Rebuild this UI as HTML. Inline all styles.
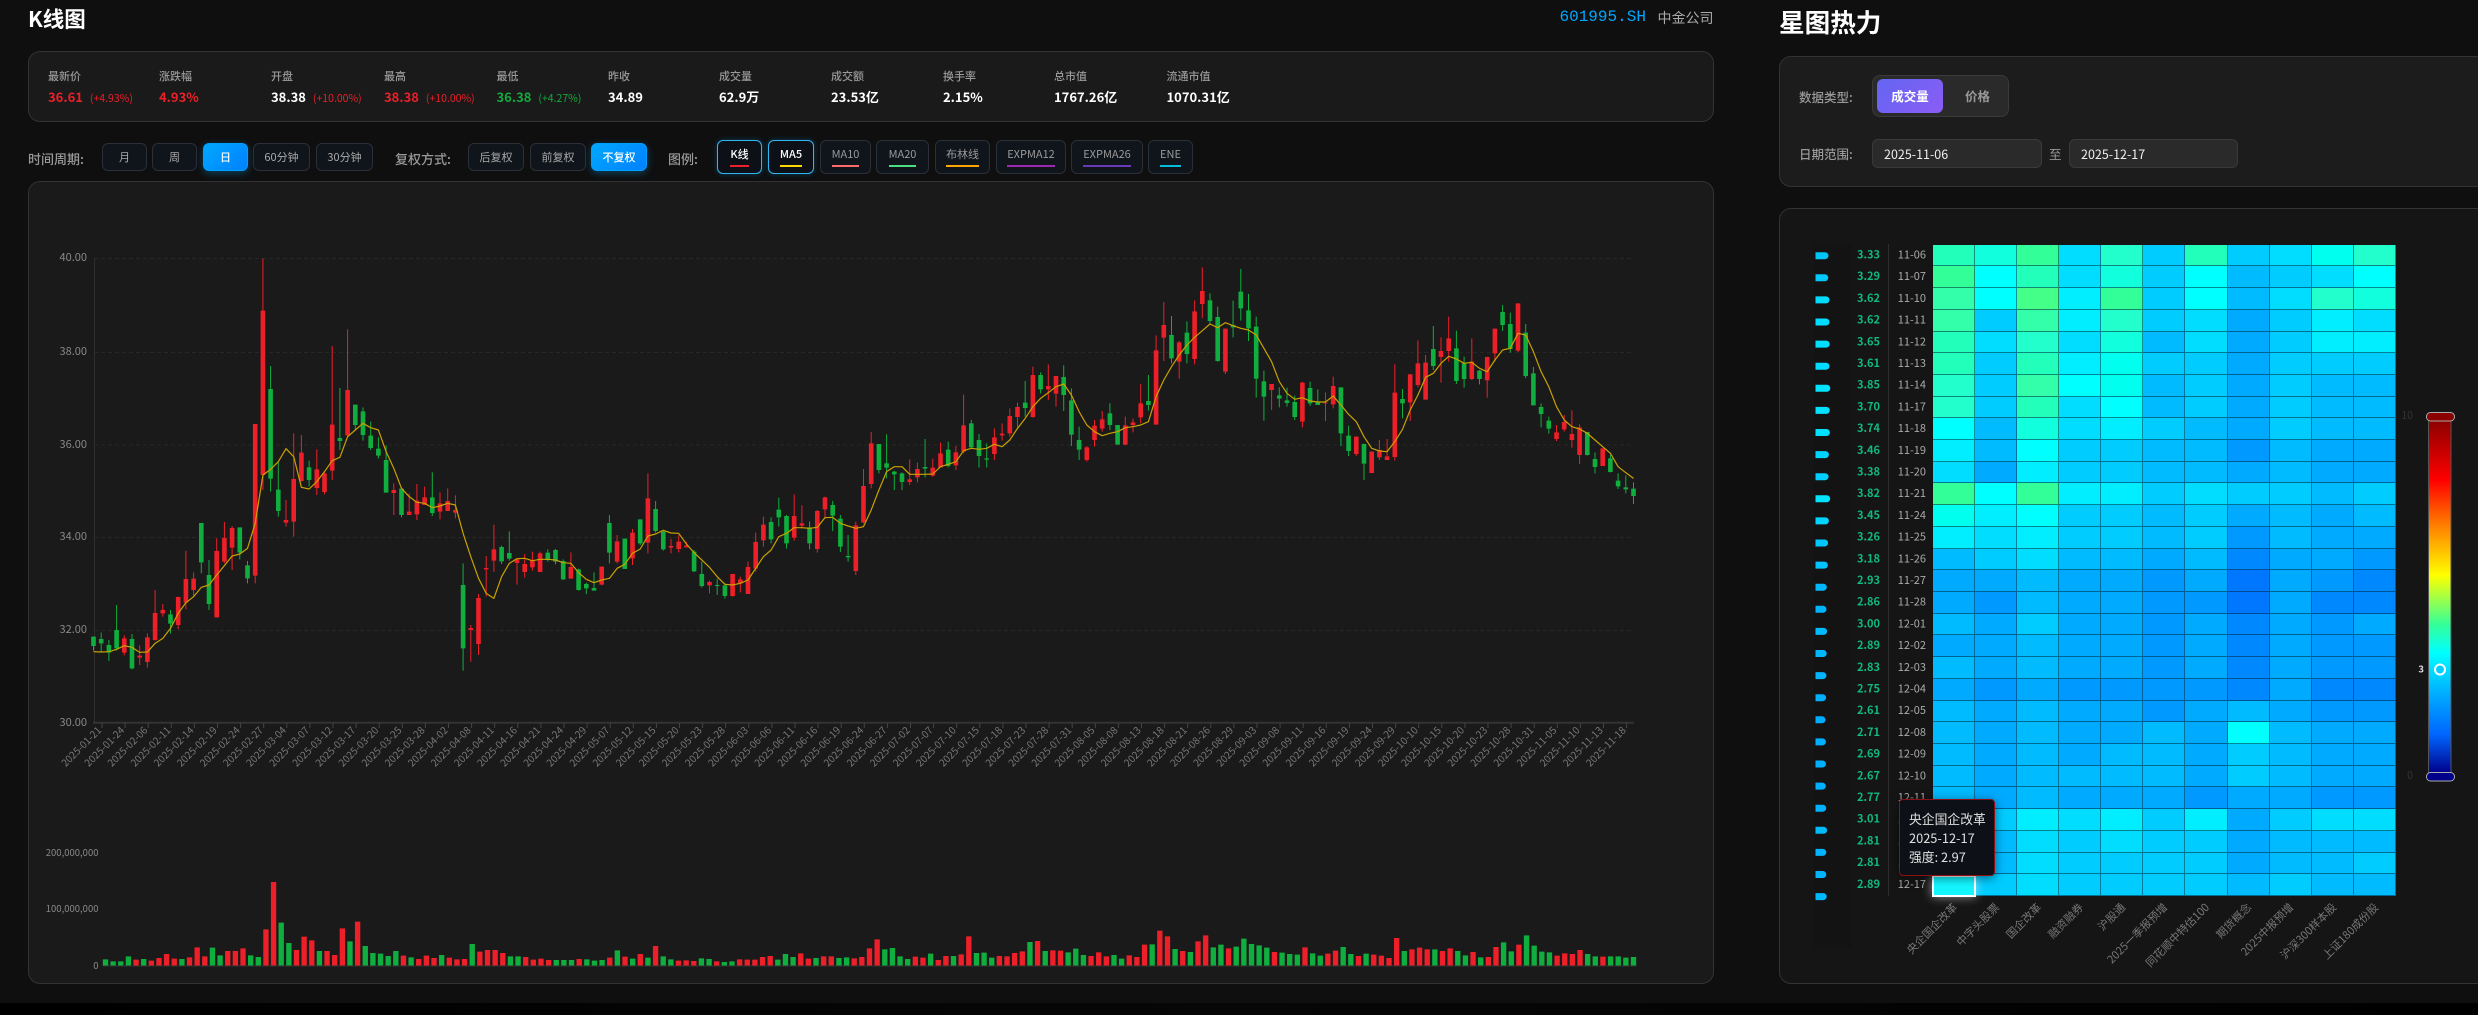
<!DOCTYPE html>
<html lang="zh"><head><meta charset="utf-8"><title>K线图</title>
<style>
*{box-sizing:border-box}
html,body{margin:0;padding:0;width:2478px;height:1015px;overflow:hidden;background:#0f0f0f}
body{position:relative;font-family:"Noto Sans CJK SC","Liberation Sans",sans-serif;color:#fff}
.a{position:absolute;white-space:nowrap}
.card{position:absolute;background:#1a1a1a;border:1px solid #333;border-radius:12px}
.lb{position:absolute;top:68px;font-size:11px;line-height:16px;color:#999;font-weight:500}
.v{position:absolute;top:86px;font-size:13px;line-height:22px;font-weight:700;color:#fff}
.c{font-size:10.5px;font-weight:400;margin-left:7px}
.r{color:#ed1f28}.g{color:#12ab3e}
.t{position:absolute;font-size:13px;line-height:20px;top:149px;color:#999;font-weight:500}
.b{position:absolute;top:143px;height:28px;border:1px solid #2a2f38;border-radius:6px;background:#10151c;color:#aaa;font-size:11px;display:flex;align-items:center;justify-content:center}
.on{background:linear-gradient(135deg,#00a8ff,#0080ff);border-color:#00a0ff;color:#fff;font-weight:500;box-shadow:0 2px 8px rgba(0,168,255,.35)}
.l{position:absolute;top:140px;height:34px;border:1px solid #2a2f38;border-radius:6px;background:#10151c;color:#999;font-size:11px;display:flex;align-items:flex-start;justify-content:center;padding-top:5px}
.l span{display:block;line-height:16px;padding-bottom:3px;border-bottom:2px solid}
.la{border-color:#33b5f0;color:#fff;font-weight:500;background:#0d1117;box-shadow:0 0 6px rgba(0,168,255,.3)}
.in{position:absolute;top:139px;height:29px;background:#2a2a2a;border:1px solid #3a3a3a;border-radius:6px;color:#eee;font-size:12.5px;line-height:27px;padding-left:11px}
#heat{position:absolute;left:1932.6px;top:244.7px;width:463.6px;height:651.3px;display:grid;grid-template-columns:repeat(11,1fr);grid-template-rows:repeat(30,1fr)}
#heat i{display:block;border-right:1px solid rgba(0,40,60,.5);border-bottom:1px solid rgba(0,40,60,.55)}
svg{position:absolute;left:0;top:0}
text{font-family:"Noto Sans CJK SC","Liberation Sans",sans-serif}
.ax{font-size:11px;fill:#888;text-anchor:end}
.xl{font-size:10px;fill:#777;text-anchor:end}
.hv{font-size:11px;fill:#10b981;font-weight:700;text-anchor:end}
.hd{font-size:11px;fill:#aaa;text-anchor:end}
.hx{font-size:11px;fill:#777;text-anchor:end}
</style></head><body>
<div class="a" style="left:0;top:1003px;width:2478px;height:12px;background:linear-gradient(90deg,#000,#070707 50%,#000)"></div>

<div class="a" style="left:28px;top:2px;font-size:21.5px;line-height:34px;font-weight:700">K线图</div>
<div class="a" style="left:1559.5px;top:6px;font-family:'Liberation Mono',monospace;font-size:16px;line-height:22px;color:#00a8ff">601995.SH</div>
<div class="a" style="left:1657.5px;top:7px;font-size:14px;line-height:22px;color:#aaa">中金公司</div>
<div class="a" style="left:1779px;top:2px;font-size:25.6px;line-height:40px;font-weight:700">星图热力</div>

<div class="card" style="left:28px;top:51px;width:1686px;height:71px"></div>
<div class="lb" style="left:48px">最新价</div><div class="v r" style="left:48px">36.61<span class="c">(+4.93%)</span></div>
<div class="lb" style="left:159px">涨跌幅</div><div class="v r" style="left:159px">4.93%</div>
<div class="lb" style="left:271px">开盘</div><div class="v" style="left:271px">38.38<span class="c r">(+10.00%)</span></div>
<div class="lb" style="left:384px">最高</div><div class="v r" style="left:384px">38.38<span class="c">(+10.00%)</span></div>
<div class="lb" style="left:496.5px">最低</div><div class="v g" style="left:496.5px">36.38<span class="c">(+4.27%)</span></div>
<div class="lb" style="left:608px">昨收</div><div class="v" style="left:608px">34.89</div>
<div class="lb" style="left:719px">成交量</div><div class="v" style="left:719px">62.9万</div>
<div class="lb" style="left:831px">成交额</div><div class="v" style="left:831px">23.53亿</div>
<div class="lb" style="left:943px">换手率</div><div class="v" style="left:943px">2.15%</div>
<div class="lb" style="left:1054px">总市值</div><div class="v" style="left:1054px">1767.26亿</div>
<div class="lb" style="left:1166.5px">流通市值</div><div class="v" style="left:1166.5px">1070.31亿</div>

<div class="t" style="left:28px">时间周期:</div>
<div class="b" style="left:102px;width:45px">月</div>
<div class="b" style="left:152px;width:45px">周</div>
<div class="b on" style="left:203px;width:45px">日</div>
<div class="b" style="left:253px;width:57px">60分钟</div>
<div class="b" style="left:316px;width:57px">30分钟</div>
<div class="t" style="left:395px">复权方式:</div>
<div class="b" style="left:468px;width:56px">后复权</div>
<div class="b" style="left:530px;width:56px">前复权</div>
<div class="b on" style="left:591px;width:56px">不复权</div>
<div class="t" style="left:668px">图例:</div>
<div class="l la" style="left:717px;width:45px"><span style="border-color:#ed1f28">K线</span></div>
<div class="l la" style="left:768px;width:46px"><span style="border-color:#ffd700">MA5</span></div>
<div class="l" style="left:820px;width:51px"><span style="border-color:#ff6b6b">MA10</span></div>
<div class="l" style="left:876px;width:53px"><span style="border-color:#4ade80">MA20</span></div>
<div class="l" style="left:935px;width:55px"><span style="border-color:#ffa500">布林线</span></div>
<div class="l" style="left:996px;width:70px"><span style="border-color:#9c27b0">EXPMA12</span></div>
<div class="l" style="left:1071px;width:72px"><span style="border-color:#673ab7">EXPMA26</span></div>
<div class="l" style="left:1148px;width:45px"><span style="border-color:#00bcd4">ENE</span></div>

<div class="card" style="left:28px;top:181px;width:1686px;height:803px"></div>

<div class="card" style="left:1779px;top:56px;width:760px;height:131px;background:#1c1c1c"></div>
<div class="t" style="left:1799px;top:87px;font-size:12.5px">数据类型:</div>
<div class="a" style="left:1872px;top:75px;width:137px;height:42px;background:#2a2a2a;border:1px solid #3a3a3a;border-radius:8px"></div>
<div class="a" style="left:1877px;top:79px;width:66px;height:34px;border-radius:6px;background:linear-gradient(135deg,#6366f1,#8b5cf6);font-size:12.5px;font-weight:700;line-height:34px;text-align:center">成交量</div>
<div class="a" style="left:1965px;top:86px;font-size:12.5px;font-weight:700;color:#999;line-height:20px">价格</div>
<div class="t" style="left:1799px;top:144px;font-size:12.5px">日期范围:</div>
<div class="in" style="left:1872px;width:170px">2025-11-06</div>
<div class="a" style="left:2049px;top:144px;font-size:12.5px;line-height:20px;color:#999">至</div>
<div class="in" style="left:2069px;width:169px">2025-12-17</div>

<div class="card" style="left:1779px;top:208px;width:760px;height:776px;background:#151515"></div>
<div class="a" style="left:1814px;top:244px;width:37px;height:704px;background:#131313"></div>

<div id="heat">
<i style="background:#2fb"></i><i style="background:#1fd"></i><i style="background:#3f9"></i><i style="background:#0df"></i><i style="background:#2fc"></i><i style="background:#0cf"></i><i style="background:#2fb"></i><i style="background:#0cf"></i><i style="background:#0df"></i><i style="background:#0fe"></i><i style="background:#2fc"></i>
<i style="background:#3f9"></i><i style="background:#0ff"></i><i style="background:#2fb"></i><i style="background:#0df"></i><i style="background:#1fd"></i><i style="background:#0cf"></i><i style="background:#0ff"></i><i style="background:#0bf"></i><i style="background:#0cf"></i><i style="background:#0df"></i><i style="background:#0ff"></i>
<i style="background:#3fa"></i><i style="background:#0ff"></i><i style="background:#4f8"></i><i style="background:#0ef"></i><i style="background:#3f9"></i><i style="background:#0cf"></i><i style="background:#0ff"></i><i style="background:#0bf"></i><i style="background:#0df"></i><i style="background:#2fc"></i><i style="background:#1fd"></i>
<i style="background:#3fa"></i><i style="background:#0cf"></i><i style="background:#3fa"></i><i style="background:#0ef"></i><i style="background:#2fc"></i><i style="background:#0cf"></i><i style="background:#0df"></i><i style="background:#0af"></i><i style="background:#0cf"></i><i style="background:#0ef"></i><i style="background:#0df"></i>
<i style="background:#2fb"></i><i style="background:#0df"></i><i style="background:#2fc"></i><i style="background:#0df"></i><i style="background:#1fd"></i><i style="background:#0bf"></i><i style="background:#0df"></i><i style="background:#0af"></i><i style="background:#0cf"></i><i style="background:#0ef"></i><i style="background:#0ef"></i>
<i style="background:#2fb"></i><i style="background:#0cf"></i><i style="background:#2fb"></i><i style="background:#0ef"></i><i style="background:#0fe"></i><i style="background:#0cf"></i><i style="background:#0cf"></i><i style="background:#0af"></i><i style="background:#0cf"></i><i style="background:#0cf"></i><i style="background:#0cf"></i>
<i style="background:#2fc"></i><i style="background:#0cf"></i><i style="background:#3fa"></i><i style="background:#0ff"></i><i style="background:#0fe"></i><i style="background:#0bf"></i><i style="background:#0cf"></i><i style="background:#0af"></i><i style="background:#0cf"></i><i style="background:#0bf"></i><i style="background:#0bf"></i>
<i style="background:#2fc"></i><i style="background:#0cf"></i><i style="background:#2fb"></i><i style="background:#0df"></i><i style="background:#0ff"></i><i style="background:#0bf"></i><i style="background:#0cf"></i><i style="background:#0af"></i><i style="background:#0cf"></i><i style="background:#0bf"></i><i style="background:#0bf"></i>
<i style="background:#0ff"></i><i style="background:#0bf"></i><i style="background:#1fd"></i><i style="background:#0df"></i><i style="background:#0ef"></i><i style="background:#0cf"></i><i style="background:#0bf"></i><i style="background:#0af"></i><i style="background:#0cf"></i><i style="background:#0bf"></i><i style="background:#0bf"></i>
<i style="background:#0ef"></i><i style="background:#0bf"></i><i style="background:#0ff"></i><i style="background:#0cf"></i><i style="background:#0cf"></i><i style="background:#0bf"></i><i style="background:#0bf"></i><i style="background:#09f"></i><i style="background:#0bf"></i><i style="background:#0af"></i><i style="background:#0af"></i>
<i style="background:#0df"></i><i style="background:#0af"></i><i style="background:#0ef"></i><i style="background:#0cf"></i><i style="background:#0cf"></i><i style="background:#0bf"></i><i style="background:#0bf"></i><i style="background:#0af"></i><i style="background:#0bf"></i><i style="background:#0af"></i><i style="background:#0af"></i>
<i style="background:#3f9"></i><i style="background:#0ff"></i><i style="background:#3f9"></i><i style="background:#0ef"></i><i style="background:#0ef"></i><i style="background:#0cf"></i><i style="background:#0df"></i><i style="background:#0cf"></i><i style="background:#0cf"></i><i style="background:#0bf"></i><i style="background:#0cf"></i>
<i style="background:#0fe"></i><i style="background:#0ef"></i><i style="background:#0ff"></i><i style="background:#0cf"></i><i style="background:#0cf"></i><i style="background:#0bf"></i><i style="background:#0cf"></i><i style="background:#0af"></i><i style="background:#0bf"></i><i style="background:#0af"></i><i style="background:#0bf"></i>
<i style="background:#0ef"></i><i style="background:#0df"></i><i style="background:#0ef"></i><i style="background:#0cf"></i><i style="background:#0cf"></i><i style="background:#0bf"></i><i style="background:#0cf"></i><i style="background:#09f"></i><i style="background:#0bf"></i><i style="background:#0af"></i><i style="background:#0af"></i>
<i style="background:#0bf"></i><i style="background:#0cf"></i><i style="background:#0df"></i><i style="background:#0bf"></i><i style="background:#0bf"></i><i style="background:#0af"></i><i style="background:#0bf"></i><i style="background:#08f"></i><i style="background:#0af"></i><i style="background:#0af"></i><i style="background:#09f"></i>
<i style="background:#0af"></i><i style="background:#0af"></i><i style="background:#0bf"></i><i style="background:#0af"></i><i style="background:#0af"></i><i style="background:#09f"></i><i style="background:#0af"></i><i style="background:#07f"></i><i style="background:#0af"></i><i style="background:#09f"></i><i style="background:#08f"></i>
<i style="background:#0af"></i><i style="background:#09f"></i><i style="background:#0bf"></i><i style="background:#0af"></i><i style="background:#0af"></i><i style="background:#09f"></i><i style="background:#09f"></i><i style="background:#07f"></i><i style="background:#0af"></i><i style="background:#08f"></i><i style="background:#08f"></i>
<i style="background:#0bf"></i><i style="background:#0af"></i><i style="background:#0cf"></i><i style="background:#0af"></i><i style="background:#0af"></i><i style="background:#09f"></i><i style="background:#0af"></i><i style="background:#08f"></i><i style="background:#0af"></i><i style="background:#09f"></i><i style="background:#0af"></i>
<i style="background:#0af"></i><i style="background:#0af"></i><i style="background:#0bf"></i><i style="background:#0af"></i><i style="background:#0af"></i><i style="background:#09f"></i><i style="background:#0af"></i><i style="background:#08f"></i><i style="background:#0af"></i><i style="background:#09f"></i><i style="background:#09f"></i>
<i style="background:#0bf"></i><i style="background:#0af"></i><i style="background:#0bf"></i><i style="background:#0af"></i><i style="background:#0af"></i><i style="background:#09f"></i><i style="background:#0af"></i><i style="background:#08f"></i><i style="background:#0af"></i><i style="background:#09f"></i><i style="background:#09f"></i>
<i style="background:#0af"></i><i style="background:#09f"></i><i style="background:#0af"></i><i style="background:#09f"></i><i style="background:#09f"></i><i style="background:#09f"></i><i style="background:#09f"></i><i style="background:#08f"></i><i style="background:#0af"></i><i style="background:#08f"></i><i style="background:#08f"></i>
<i style="background:#0bf"></i><i style="background:#0af"></i><i style="background:#0bf"></i><i style="background:#0af"></i><i style="background:#0af"></i><i style="background:#09f"></i><i style="background:#0af"></i><i style="background:#0bf"></i><i style="background:#0af"></i><i style="background:#09f"></i><i style="background:#09f"></i>
<i style="background:#0bf"></i><i style="background:#0af"></i><i style="background:#0bf"></i><i style="background:#0af"></i><i style="background:#0af"></i><i style="background:#0bf"></i><i style="background:#0af"></i><i style="background:#0ff"></i><i style="background:#0bf"></i><i style="background:#0af"></i><i style="background:#0af"></i>
<i style="background:#0bf"></i><i style="background:#0af"></i><i style="background:#0bf"></i><i style="background:#0af"></i><i style="background:#0bf"></i><i style="background:#0bf"></i><i style="background:#0af"></i><i style="background:#0cf"></i><i style="background:#0bf"></i><i style="background:#0af"></i><i style="background:#0af"></i>
<i style="background:#0bf"></i><i style="background:#0af"></i><i style="background:#0bf"></i><i style="background:#0bf"></i><i style="background:#0bf"></i><i style="background:#0bf"></i><i style="background:#0af"></i><i style="background:#0cf"></i><i style="background:#0bf"></i><i style="background:#0af"></i><i style="background:#0af"></i>
<i style="background:#0bf"></i><i style="background:#0af"></i><i style="background:#0bf"></i><i style="background:#0af"></i><i style="background:#0af"></i><i style="background:#0af"></i><i style="background:#09f"></i><i style="background:#0af"></i><i style="background:#0af"></i><i style="background:#09f"></i><i style="background:#09f"></i>
<i style="background:#0cf"></i><i style="background:#0cf"></i><i style="background:#0ef"></i><i style="background:#0df"></i><i style="background:#0ef"></i><i style="background:#0cf"></i><i style="background:#0ef"></i><i style="background:#0af"></i><i style="background:#0cf"></i><i style="background:#0df"></i><i style="background:#0df"></i>
<i style="background:#0cf"></i><i style="background:#0bf"></i><i style="background:#0df"></i><i style="background:#0cf"></i><i style="background:#0df"></i><i style="background:#0cf"></i><i style="background:#0cf"></i><i style="background:#0af"></i><i style="background:#0bf"></i><i style="background:#0bf"></i><i style="background:#0bf"></i>
<i style="background:#0cf"></i><i style="background:#0bf"></i><i style="background:#0df"></i><i style="background:#0cf"></i><i style="background:#0cf"></i><i style="background:#0cf"></i><i style="background:#0cf"></i><i style="background:#0af"></i><i style="background:#0bf"></i><i style="background:#0bf"></i><i style="background:#0cf"></i>
<i style="background:#0ff"></i><i style="background:#0cf"></i><i style="background:#0df"></i><i style="background:#0cf"></i><i style="background:#0cf"></i><i style="background:#0cf"></i><i style="background:#0cf"></i><i style="background:#0bf"></i><i style="background:#0cf"></i><i style="background:#0bf"></i><i style="background:#0bf"></i>
</div>

<svg width="2478" height="1015" viewBox="0 0 2478 1015" fill="none">
<g stroke="#272727" stroke-dasharray="4 3"><path d="M94 258.5H1633M94 352.5H1633M94 445H1633M94 537.5H1633M94 630.5H1633"/></g>
<path d="M94.5 258V722" stroke="#2e2e2e"/>
<path d="M93 722.7H1634" stroke="#333" stroke-width="2"/>
<path stroke="#444" d="M102 723v5M125.1 723v5M148.2 723v5M171.3 723v5M194.4 723v5M217.5 723v5M240.6 723v5M263.7 723v5M286.8 723v5M309.9 723v5M333 723v5M356.1 723v5M379.2 723v5M402.3 723v5M425.4 723v5M448.5 723v5M471.6 723v5M494.7 723v5M517.8 723v5M540.9 723v5M564 723v5M587.1 723v5M610.2 723v5M633.3 723v5M656.4 723v5M679.5 723v5M702.6 723v5M725.7 723v5M748.8 723v5M771.9 723v5M795 723v5M818.1 723v5M841.2 723v5M864.3 723v5M887.4 723v5M910.5 723v5M933.6 723v5M956.7 723v5M979.8 723v5M1002.9 723v5M1026 723v5M1049.1 723v5M1072.2 723v5M1095.3 723v5M1118.4 723v5M1141.5 723v5M1164.6 723v5M1187.7 723v5M1210.8 723v5M1233.9 723v5M1257 723v5M1280.1 723v5M1303.2 723v5M1326.3 723v5M1349.4 723v5M1372.5 723v5M1395.6 723v5M1418.7 723v5M1441.8 723v5M1464.9 723v5M1488 723v5M1511.1 723v5M1534.2 723v5M1557.3 723v5M1580.4 723v5M1603.5 723v5M1626.6 723v5"/>
<g><text class="ax" x="87" y="261">40.00</text><text class="ax" x="87" y="355">38.00</text><text class="ax" x="87" y="448">36.00</text><text class="ax" x="87" y="540">34.00</text><text class="ax" x="87" y="633">32.00</text><text class="ax" x="87" y="726">30.00</text></g>
<g>
<text class="xl" transform="translate(102,731) rotate(-45)">2025-01-21</text><text class="xl" transform="translate(125.1,731) rotate(-45)">2025-01-24</text><text class="xl" transform="translate(148.2,731) rotate(-45)">2025-02-06</text><text class="xl" transform="translate(171.3,731) rotate(-45)">2025-02-11</text><text class="xl" transform="translate(194.4,731) rotate(-45)">2025-02-14</text><text class="xl" transform="translate(217.5,731) rotate(-45)">2025-02-19</text><text class="xl" transform="translate(240.6,731) rotate(-45)">2025-02-24</text><text class="xl" transform="translate(263.7,731) rotate(-45)">2025-02-27</text><text class="xl" transform="translate(286.8,731) rotate(-45)">2025-03-04</text><text class="xl" transform="translate(309.9,731) rotate(-45)">2025-03-07</text><text class="xl" transform="translate(333,731) rotate(-45)">2025-03-12</text><text class="xl" transform="translate(356.1,731) rotate(-45)">2025-03-17</text><text class="xl" transform="translate(379.2,731) rotate(-45)">2025-03-20</text><text class="xl" transform="translate(402.3,731) rotate(-45)">2025-03-25</text><text class="xl" transform="translate(425.4,731) rotate(-45)">2025-03-28</text><text class="xl" transform="translate(448.5,731) rotate(-45)">2025-04-02</text><text class="xl" transform="translate(471.6,731) rotate(-45)">2025-04-08</text><text class="xl" transform="translate(494.7,731) rotate(-45)">2025-04-11</text><text class="xl" transform="translate(517.8,731) rotate(-45)">2025-04-16</text><text class="xl" transform="translate(540.9,731) rotate(-45)">2025-04-21</text><text class="xl" transform="translate(564,731) rotate(-45)">2025-04-24</text><text class="xl" transform="translate(587.1,731) rotate(-45)">2025-04-29</text><text class="xl" transform="translate(610.2,731) rotate(-45)">2025-05-07</text><text class="xl" transform="translate(633.3,731) rotate(-45)">2025-05-12</text><text class="xl" transform="translate(656.4,731) rotate(-45)">2025-05-15</text><text class="xl" transform="translate(679.5,731) rotate(-45)">2025-05-20</text><text class="xl" transform="translate(702.6,731) rotate(-45)">2025-05-23</text><text class="xl" transform="translate(725.7,731) rotate(-45)">2025-05-28</text><text class="xl" transform="translate(748.8,731) rotate(-45)">2025-06-03</text><text class="xl" transform="translate(771.9,731) rotate(-45)">2025-06-06</text><text class="xl" transform="translate(795,731) rotate(-45)">2025-06-11</text><text class="xl" transform="translate(818.1,731) rotate(-45)">2025-06-16</text><text class="xl" transform="translate(841.2,731) rotate(-45)">2025-06-19</text><text class="xl" transform="translate(864.3,731) rotate(-45)">2025-06-24</text><text class="xl" transform="translate(887.4,731) rotate(-45)">2025-06-27</text><text class="xl" transform="translate(910.5,731) rotate(-45)">2025-07-02</text><text class="xl" transform="translate(933.6,731) rotate(-45)">2025-07-07</text><text class="xl" transform="translate(956.7,731) rotate(-45)">2025-07-10</text><text class="xl" transform="translate(979.8,731) rotate(-45)">2025-07-15</text><text class="xl" transform="translate(1002.9,731) rotate(-45)">2025-07-18</text><text class="xl" transform="translate(1026,731) rotate(-45)">2025-07-23</text><text class="xl" transform="translate(1049.1,731) rotate(-45)">2025-07-28</text><text class="xl" transform="translate(1072.2,731) rotate(-45)">2025-07-31</text><text class="xl" transform="translate(1095.3,731) rotate(-45)">2025-08-05</text><text class="xl" transform="translate(1118.4,731) rotate(-45)">2025-08-08</text><text class="xl" transform="translate(1141.5,731) rotate(-45)">2025-08-13</text><text class="xl" transform="translate(1164.6,731) rotate(-45)">2025-08-18</text><text class="xl" transform="translate(1187.7,731) rotate(-45)">2025-08-21</text><text class="xl" transform="translate(1210.8,731) rotate(-45)">2025-08-26</text><text class="xl" transform="translate(1233.9,731) rotate(-45)">2025-08-29</text><text class="xl" transform="translate(1257,731) rotate(-45)">2025-09-03</text><text class="xl" transform="translate(1280.1,731) rotate(-45)">2025-09-08</text><text class="xl" transform="translate(1303.2,731) rotate(-45)">2025-09-11</text><text class="xl" transform="translate(1326.3,731) rotate(-45)">2025-09-16</text><text class="xl" transform="translate(1349.4,731) rotate(-45)">2025-09-19</text><text class="xl" transform="translate(1372.5,731) rotate(-45)">2025-09-24</text><text class="xl" transform="translate(1395.6,731) rotate(-45)">2025-09-29</text><text class="xl" transform="translate(1418.7,731) rotate(-45)">2025-10-10</text><text class="xl" transform="translate(1441.8,731) rotate(-45)">2025-10-15</text><text class="xl" transform="translate(1464.9,731) rotate(-45)">2025-10-20</text><text class="xl" transform="translate(1488,731) rotate(-45)">2025-10-23</text><text class="xl" transform="translate(1511.1,731) rotate(-45)">2025-10-28</text><text class="xl" transform="translate(1534.2,731) rotate(-45)">2025-10-31</text><text class="xl" transform="translate(1557.3,731) rotate(-45)">2025-11-05</text><text class="xl" transform="translate(1580.4,731) rotate(-45)">2025-11-10</text><text class="xl" transform="translate(1603.5,731) rotate(-45)">2025-11-13</text><text class="xl" transform="translate(1626.6,731) rotate(-45)">2025-11-18</text>
</g>

<g transform="translate(93.5,230) scale(7.7,.33333)">
<path stroke="#0fae3e" stroke-width=".13" d="M0 1220V1262M1 1208V1265M2 1230V1293M3 1125V1262M5 1212V1318M10 1140V1211M14 879V1030M15 990V1140M19 892V988M20 993V1060M23 408V785M24 695V860M28 692V770M32 474V660M34 524V600M35 532V632M36 575V660M37 622V685M38 646V788M40 772V862M44 727V858M48 1000V1322M53 947V1002M54 904V992M59 958V995M60 957V1003M61 988V1050M63 1016V1082M64 1058V1092M65 1027V1082M67 855V1000M69 925V1017M71 868V945M73 813V908M74 900V962M78 960V1026M79 995V1073M81 1046V1095M82 1060V1106M88 862V940M89 803V890M90 855V956M93 874V958M96 813V903M97 855V966M98 915V995M102 642V730M103 613V745M104 722V780M105 727V780M108 627V742M111 635V712M114 570V655M115 612V713M116 640V713M121 453V560M123 427V490M126 406V543M127 475V648M128 590V690M132 520V600M133 585V644M137 435V542M140 258V400M142 274V400M145 190V282M146 230V395M148 212V322M149 117V272M150 192V333M151 260V503M152 422V572M154 472V532M155 473V530M156 497V570M158 455V528M159 478V525M162 472V648M163 587V678M165 641V750M170 477V565M174 288V420M177 302V462M178 380V473M180 420V463M183 225V303M184 248V368M186 282V444M187 411V526M188 520V592M189 560V611M194 606V677M195 667V730M197 675V727M198 730V777M199 736V790M200 757V822"/>
<path stroke="#0fae3e" stroke-width=".6" d="M0 1220V1248M1 1227V1240M2 1245V1268M3 1200V1255M5 1227V1315M10 1153V1181M14 879V997M15 1035V1122M19 892V968M20 1006V1045M23 477V746M24 779V843M28 712V750M32 624V633M34 524V585M35 544V615M36 617V654M37 656V677M38 690V788M40 776V855M44 802V849M48 1065V1255M53 951V994M54 969V986M59 968V990M60 960V995M61 993V1048M63 1018V1080M64 1062V1075M65 1074V1082M67 879V968M69 926V1017M71 868V940M73 837V903M74 905V958M78 965V1024M79 1032V1068M81 1065V1068M82 1066V1098M88 876V928M89 839V862M90 858V940M93 892V940M96 825V857M97 866V950M98 978V982M102 642V720M103 700V713M104 725V733M105 730V756M108 711V716M111 659V708M114 580V652M115 630V678M116 685V689M121 518V534M123 435V478M126 441V495M127 511V614M128 630V659M132 550V585M133 585V644M137 513V525M140 315V385M142 308V372M145 211V273M146 261V393M148 285V292M149 185V235M150 241V295M151 290V446M152 454V500M154 496V506M155 511V519M156 516V561M158 474V520M159 515V525M162 472V610M163 617V663M165 642V701M170 507V520M174 357V408M177 355V453M178 400V447M180 422V447M183 246V285M184 282V357M186 308V438M187 430V526M188 531V552M189 572V596M194 606V675M195 687V711M197 685V726M198 752V769M199 772V778M200 776V798"/>
<path stroke="#ed1f28" stroke-width=".13" d="M4 1216V1276M6 1246V1305M7 1210V1313M8 1080V1232M9 1122V1160M11 1100V1198M12 962V1138M13 1027V1100M16 925V1162M17 876V1000M18 888V1020M21 582V1060M22 85V780M25 810V890M26 610V920M27 615V755M29 658V795M30 728V793M31 348V750M33 298V620M39 760V855M41 790V855M42 762V870M43 770V825M45 787V868M46 775V843M47 796V865M49 1185V1295M50 1092V1275M51 978V1100M52 884V1026M55 985V1064M56 972V1043M57 965V1022M58 965V1026M62 967V1046M66 1010V1066M68 915V1000M70 897V1005M72 730V970M75 927V970M76 915V967M77 935V952M80 1052V1090M83 1032V1100M84 1040V1087M85 995V1092M86 908V1025M87 860V950M91 793V932M92 826V895M94 840V968M95 800V865M99 875V1035M100 717V880M101 606V775M106 688V765M107 698V757M109 686V740M110 638V712M112 648V720M113 494V670M117 595V690M118 580V632M119 535V620M120 518V595M122 410V563M124 403V510M125 438V530M129 648V695M130 570V650M131 543V605M134 560V645M135 566V607M136 462V580M138 316V584M139 216V393M141 333V446M143 211V403M144 112V265M147 296V432M153 462V540M157 456V592M160 487V573M161 440V535M164 619V678M166 664V729M167 630V690M168 627V690M169 403V692M171 432V573M172 331V472M173 375V509M175 322V458M176 260V395M179 325V450M181 380V503M182 296V395M185 220V366M190 585V633M191 555V605M192 541V653M193 583V702M196 655V708"/>
<path stroke="#ed1f28" stroke-width=".6" d="M4 1225V1268M6 1277V1283M7 1222V1296M8 1149V1230M9 1140V1150M11 1101V1185M12 1047V1118M13 1046V1080M16 963V1162M17 924V995M18 894V953M21 582V1037M22 242V735M25 870V878M26 747V875M27 668V753M29 718V774M30 730V786M31 584V722M33 480V616M39 780V789M41 845V855M42 812V853M43 802V825M45 820V845M46 813V843M47 840V848M49 1194V1200M50 1104V1242M51 1014V1018M52 958V992M55 988V999M56 1002V1026M57 990V1012M58 970V1026M62 1011V1046M66 1010V1064M68 934V995M70 908V985M72 805V938M75 948V953M76 935V957M77 947V952M80 1056V1066M83 1032V1098M84 1048V1060M85 1011V1092M86 936V1016M87 884V931M91 858V923M92 880V887M94 843V957M95 802V838M99 886V1023M100 768V877M101 640V762M106 748V756M107 717V742M109 713V737M110 670V712M112 667V706M113 586V665M117 622V672M118 611V616M119 558V610M120 531V561M122 435V561M124 468V478M125 438V491M129 652V690M130 587V630M131 568V596M134 586V644M135 577V585M136 520V562M138 361V584M139 285V323M141 337V395M143 244V387M144 183V222M147 296V425M153 462V480M157 458V575M160 518V520M161 468V523M164 620V672M166 665V729M167 660V682M168 679V690M169 488V681M171 433V517M172 400V465M173 398V509M175 363V381M176 325V363M179 395V447M181 381V451M182 296V370M185 220V362M190 607V627M191 576V598M192 612V630M193 592V675M196 655V708"/>
<polyline vector-effect="non-scaling-stroke" stroke="#c9a200" stroke-width="1.2" stroke-linejoin="round" points="0,1265 1,1266 2,1265 3,1258 4,1247 5,1252 6,1267 7,1266 8,1240 9,1225 10,1195 11,1150 12,1118 13,1100 14,1072 15,1065 16,1035 17,1007 18,978 19,972 20,955 21,880 22,735 23,718 24,695 25,656 26,680 27,772 28,777 29,755 30,725 31,692 32,682 33,620 34,600 35,580 36,593 37,600 38,665 39,715 40,775 41,800 42,817 43,820 44,833 45,828 46,820 47,825 48,910 49,980 50,1045 51,1090 52,1105 53,1040 54,1000 55,986 56,985 57,992 58,988 59,988 60,990 61,998 62,1000 63,1028 64,1048 65,1058 66,1050 67,1045 68,1015 69,1003 70,970 71,957 72,918 73,912 74,901 75,909 76,910 77,942 78,968 79,990 80,1012 81,1040 82,1063 83,1065 84,1060 85,1050 86,1015 87,980 88,960 89,920 90,910 91,893 92,893 93,895 94,892 95,863 96,862 97,880 98,888 99,895 100,890 101,840 102,780 103,725 104,710 105,710 106,733 107,733 108,733 109,732 110,710 111,703 112,695 113,662 114,655 115,658 116,655 117,643 118,650 119,630 120,595 121,565 122,530 123,505 124,488 125,470 126,462 127,495 128,545 129,585 130,605 131,617 132,610 133,605 134,593 135,590 136,585 137,575 138,500 139,450 140,410 141,375 142,345 143,322 144,302 145,282 146,293 147,278 148,287 149,295 150,300 151,315 152,355 153,395 154,455 155,490 156,508 157,503 158,513 159,516 160,516 161,498 162,525 163,553 164,575 165,620 166,655 167,663 168,665 169,635 170,598 171,540 172,495 173,442 174,430 175,400 176,379 177,387 178,400 179,397 180,415 181,425 182,390 183,360 184,355 185,310 186,315 187,365 188,425 189,470 190,530 191,570 192,590 193,597 194,610 195,630 196,650 197,670 198,710 199,728 200,745"/>
</g>

<g><text class="ax" style="font-size:9.5px" x="98.5" y="856">200,000,000</text><text class="ax" style="font-size:9.5px" x="98.5" y="912">100,000,000</text><text class="ax" style="font-size:9.5px" x="98.5" y="969">0</text></g>
<g transform="translate(105.5,720) scale(7.64,.33333)" stroke-width=".7">
<path stroke="#0fae3e" d="M0 718V738M1 724V738M2 724V738M3 709V738M5 717V738M10 717V738M14 683V738M15 706V738M19 706V738M20 711V738M23 608V738M24 669V738M28 693V738M32 664V738M34 678V738M35 699V738M36 701V738M37 708V738M38 693V738M40 712V738M44 705V738M48 672V738M53 709V738M54 709V738M59 720V738M60 720V738M61 720V738M63 718V738M64 722V738M65 720V738M67 691V738M69 716V738M71 713V738M73 709V738M74 718V738M78 715V738M79 717V738M81 726V738M82 724V738M88 719V738M89 702V738M90 711V738M93 714V738M96 714V738M97 712V738M102 688V738M103 684V738M104 709V738M105 717V738M108 701V738M111 708V738M114 699V738M115 698V738M116 713V738M121 666V738M123 693V738M126 697V738M127 686V738M128 705V738M132 705V738M133 716V738M137 673V738M140 687V738M142 696V738M145 682V738M146 674V738M148 680V738M149 656V738M150 672V738M151 676V738M152 683V738M154 698V738M155 702V738M156 704V738M158 700V738M159 707V738M162 681V738M163 702V738M165 701V738M170 693V738M174 688V738M177 693V738M178 706V738M180 712V738M183 667V738M184 694V738M186 646V738M187 677V738M188 695V738M189 697V738M194 702V738M195 709V738M197 709V738M198 709V738M199 713V738M200 711V738"/>
<path stroke="#ed1f28" d="M4 719V738M6 722V738M7 714V738M8 702V738M9 716V738M11 712V738M12 682V738M13 709V738M16 693V738M17 693V738M18 685V738M21 628V738M22 486V738M25 690V738M26 650V738M27 661V738M29 693V738M30 705V738M31 625V738M33 605V738M39 707V738M41 717V738M42 707V738M43 714V738M45 713V738M46 718V738M47 717V738M49 695V738M50 690V738M51 690V738M52 699V738M55 711V738M56 719V738M57 716V738M58 720V738M62 717V738M66 713V738M68 710V738M70 702V738M72 678V738M75 722V738M76 721V738M77 723V738M80 724V738M83 718V738M84 719V738M85 719V738M86 711V738M87 708V738M91 700V738M92 716V738M94 709V738M95 709V738M98 715V738M99 711V738M100 685V738M101 658V738M106 710V738M107 713V738M109 720V738M110 708V738M112 703V738M113 649V738M117 708V738M118 709V738M119 699V738M120 694V738M122 663V738M124 691V738M125 692V738M129 708V738M130 697V738M131 709V738M134 706V738M135 711V738M136 674V738M138 632V738M139 649V738M141 693V738M143 664V738M144 646V738M147 685V738M153 696V738M157 682V738M160 701V738M161 692V738M164 708V738M166 704V738M167 707V738M168 714V738M169 654V738M171 688V738M172 683V738M173 688V738M175 693V738M176 685V738M179 696V738M181 711V738M182 681V738M185 674V738M190 707V738M191 700V738M192 702V738M193 690V738M196 710V738"/>
</g>
<path d="M103 966H1636" stroke="#333"/>

<g>
<path fill="#00c4f5" d="M1815.5 252.2h9.5a3.5 3.5 0 0 1 0 7h-9.5z"/>
<path fill="#00c8f8" d="M1815.5 274.3h9.3a3.5 3.5 0 0 1 0 7h-9.3z"/>
<path fill="#00dcff" d="M1815.5 296.4h10.5a3.5 3.5 0 0 1 0 7h-10.5z"/>
<path fill="#00dcff" d="M1815.5 318.5h10.5a3.5 3.5 0 0 1 0 7h-10.5z"/>
<path fill="#00deff" d="M1815.5 340.6h10.7a3.5 3.5 0 0 1 0 7h-10.7z"/>
<path fill="#00dcff" d="M1815.5 362.7h10.5a3.5 3.5 0 0 1 0 7h-10.5z"/>
<path fill="#00e4ff" d="M1815.5 384.8h11.3a3.5 3.5 0 0 1 0 7h-11.3z"/>
<path fill="#00e0ff" d="M1815.5 406.9h10.8a3.5 3.5 0 0 1 0 7h-10.8z"/>
<path fill="#00e0ff" d="M1815.5 429h10.9a3.5 3.5 0 0 1 0 7h-10.9z"/>
<path fill="#00d4ff" d="M1815.5 451.1h9.9a3.5 3.5 0 0 1 0 7h-9.9z"/>
<path fill="#00ceff" d="M1815.5 473.2h9.6a3.5 3.5 0 0 1 0 7h-9.6z"/>
<path fill="#00e4ff" d="M1815.5 495.3h11.2a3.5 3.5 0 0 1 0 7h-11.2z"/>
<path fill="#00d4ff" d="M1815.5 517.4h9.9a3.5 3.5 0 0 1 0 7h-9.9z"/>
<path fill="#00c8ff" d="M1815.5 539.5h9.1a3.5 3.5 0 0 1 0 7h-9.1z"/>
<path fill="#00c4ff" d="M1815.5 561.6h8.8a3.5 3.5 0 0 1 0 7h-8.8z"/>
<path fill="#00b8ff" d="M1815.5 583.7h7.8a3.5 3.5 0 0 1 0 7h-7.8z"/>
<path fill="#00b4ff" d="M1815.5 605.8h7.5a3.5 3.5 0 0 1 0 7h-7.5z"/>
<path fill="#00bcff" d="M1815.5 627.9h8.1a3.5 3.5 0 0 1 0 7h-8.1z"/>
<path fill="#00b8ff" d="M1815.5 650h7.7a3.5 3.5 0 0 1 0 7h-7.7z"/>
<path fill="#00b4ff" d="M1815.5 672.1h7.4a3.5 3.5 0 0 1 0 7h-7.4z"/>
<path fill="#00b0ff" d="M1815.5 694.2h7.1a3.5 3.5 0 0 1 0 7h-7.1z"/>
<path fill="#00acff" d="M1815.5 716.3h6.5a3.5 3.5 0 0 1 0 7h-6.5z"/>
<path fill="#00b0ff" d="M1815.5 738.4h6.9a3.5 3.5 0 0 1 0 7h-6.9z"/>
<path fill="#00b0ff" d="M1815.5 760.5h6.9a3.5 3.5 0 0 1 0 7h-6.9z"/>
<path fill="#00b0ff" d="M1815.5 782.6h6.8a3.5 3.5 0 0 1 0 7h-6.8z"/>
<path fill="#00b2ff" d="M1815.5 804.7h7.2a3.5 3.5 0 0 1 0 7h-7.2z"/>
<path fill="#00bcff" d="M1815.5 826.8h8.1a3.5 3.5 0 0 1 0 7h-8.1z"/>
<path fill="#00b4ff" d="M1815.5 848.9h7.3a3.5 3.5 0 0 1 0 7h-7.3z"/>
<path fill="#00b4ff" d="M1815.5 871h7.3a3.5 3.5 0 0 1 0 7h-7.3z"/>
<path fill="#00b8ff" d="M1815.5 893.1h7.7a3.5 3.5 0 0 1 0 7h-7.7z"/>
</g>
<path d="M1888.5 244V896" stroke="#2e2e2e"/>
<g>
<text class="hv" x="1880" y="258.5">3.33</text><text class="hd" x="1926" y="258.5">11-06</text>
<text class="hv" x="1880" y="280.2">3.29</text><text class="hd" x="1926" y="280.2">11-07</text>
<text class="hv" x="1880" y="301.9">3.62</text><text class="hd" x="1926" y="301.9">11-10</text>
<text class="hv" x="1880" y="323.6">3.62</text><text class="hd" x="1926" y="323.6">11-11</text>
<text class="hv" x="1880" y="345.3">3.65</text><text class="hd" x="1926" y="345.3">11-12</text>
<text class="hv" x="1880" y="367">3.61</text><text class="hd" x="1926" y="367">11-13</text>
<text class="hv" x="1880" y="388.7">3.85</text><text class="hd" x="1926" y="388.7">11-14</text>
<text class="hv" x="1880" y="410.4">3.70</text><text class="hd" x="1926" y="410.4">11-17</text>
<text class="hv" x="1880" y="432.1">3.74</text><text class="hd" x="1926" y="432.1">11-18</text>
<text class="hv" x="1880" y="453.8">3.46</text><text class="hd" x="1926" y="453.8">11-19</text>
<text class="hv" x="1880" y="475.5">3.38</text><text class="hd" x="1926" y="475.5">11-20</text>
<text class="hv" x="1880" y="497.2">3.82</text><text class="hd" x="1926" y="497.2">11-21</text>
<text class="hv" x="1880" y="518.9">3.45</text><text class="hd" x="1926" y="518.9">11-24</text>
<text class="hv" x="1880" y="540.6">3.26</text><text class="hd" x="1926" y="540.6">11-25</text>
<text class="hv" x="1880" y="562.3">3.18</text><text class="hd" x="1926" y="562.3">11-26</text>
<text class="hv" x="1880" y="584">2.93</text><text class="hd" x="1926" y="584">11-27</text>
<text class="hv" x="1880" y="605.7">2.86</text><text class="hd" x="1926" y="605.7">11-28</text>
<text class="hv" x="1880" y="627.4">3.00</text><text class="hd" x="1926" y="627.4">12-01</text>
<text class="hv" x="1880" y="649.1">2.89</text><text class="hd" x="1926" y="649.1">12-02</text>
<text class="hv" x="1880" y="670.8">2.83</text><text class="hd" x="1926" y="670.8">12-03</text>
<text class="hv" x="1880" y="692.5">2.75</text><text class="hd" x="1926" y="692.5">12-04</text>
<text class="hv" x="1880" y="714.2">2.61</text><text class="hd" x="1926" y="714.2">12-05</text>
<text class="hv" x="1880" y="735.9">2.71</text><text class="hd" x="1926" y="735.9">12-08</text>
<text class="hv" x="1880" y="757.6">2.69</text><text class="hd" x="1926" y="757.6">12-09</text>
<text class="hv" x="1880" y="779.3">2.67</text><text class="hd" x="1926" y="779.3">12-10</text>
<text class="hv" x="1880" y="801">2.77</text><text class="hd" x="1926" y="801">12-11</text>
<text class="hv" x="1880" y="822.7">3.01</text><text class="hd" x="1926" y="822.7">12-12</text>
<text class="hv" x="1880" y="844.4">2.81</text><text class="hd" x="1926" y="844.4">12-15</text>
<text class="hv" x="1880" y="866.1">2.81</text><text class="hd" x="1926" y="866.1">12-16</text>
<text class="hv" x="1880" y="887.8">2.89</text><text class="hd" x="1926" y="887.8">12-17</text>
</g>
<g>
<text class="hx" transform="translate(1958,908) rotate(-45)">央企国企改革</text>
<text class="hx" transform="translate(2000,908) rotate(-45)">中字头股票</text>
<text class="hx" transform="translate(2042,908) rotate(-45)">国企改革</text>
<text class="hx" transform="translate(2084,908) rotate(-45)">融资融券</text>
<text class="hx" transform="translate(2126,908) rotate(-45)">沪股通</text>
<text class="hx" transform="translate(2168,908) rotate(-45)">2025一季报预增</text>
<text class="hx" transform="translate(2210,908) rotate(-45)">同花顺中特估100</text>
<text class="hx" transform="translate(2252,908) rotate(-45)">期货概念</text>
<text class="hx" transform="translate(2294,908) rotate(-45)">2025中报预增</text>
<text class="hx" transform="translate(2337,908) rotate(-45)">沪深300样本股</text>
<text class="hx" transform="translate(2379,908) rotate(-45)">上证180成份股</text>
</g>
<defs><linearGradient id="vm" x1="0" y1="0" x2="0" y2="1"><stop offset="0" stop-color="#8b0000"/><stop offset=".17" stop-color="#f00"/><stop offset=".3" stop-color="#ff8000"/><stop offset=".44" stop-color="#ff0"/><stop offset=".58" stop-color="#3f9"/><stop offset=".66" stop-color="#0ff"/><stop offset=".78" stop-color="#0af"/><stop offset=".89" stop-color="#06f"/><stop offset="1" stop-color="#00008b"/></linearGradient></defs>
<rect x="2428.5" y="420" width="22.5" height="353" fill="url(#vm)" stroke="#555"/>
<rect x="2426.5" y="412.5" width="28" height="8.5" rx="4" fill="#8b0000" stroke="#aaa"/>
<rect x="2426.5" y="772.5" width="28" height="8.5" rx="4" fill="#00008b" stroke="#aaa"/>
<circle cx="2440" cy="669.5" r="5" fill="#00d0ff" stroke="#fff" stroke-width="2"/>
<text x="2424" y="672.5" text-anchor="end" font-weight="700" fill="#ddd" style="font-size:9.5px">3</text>
<text x="2413" y="419" text-anchor="end" fill="#333" style="font-size:10.5px">10</text>
<text x="2413" y="779" text-anchor="end" fill="#333" style="font-size:10.5px">0</text>
</svg>

<div class="a" style="left:1932px;top:875px;width:44px;height:21.5px;background:#14f6ff;border:2px solid #fff;box-shadow:0 0 10px rgba(255,255,255,.55)"></div>
<div class="a" style="left:1899px;top:799px;width:96px;height:77px;background:#0d1117;border:1px solid #8e0f16;border-radius:4px;box-shadow:0 2px 10px rgba(0,0,0,.5);color:#e0e0e0;font-size:12.8px;line-height:19px;padding:9px 0 0 9px">央企国企改革<br>2025-12-17<br>强度: 2.97</div>
</body></html>
